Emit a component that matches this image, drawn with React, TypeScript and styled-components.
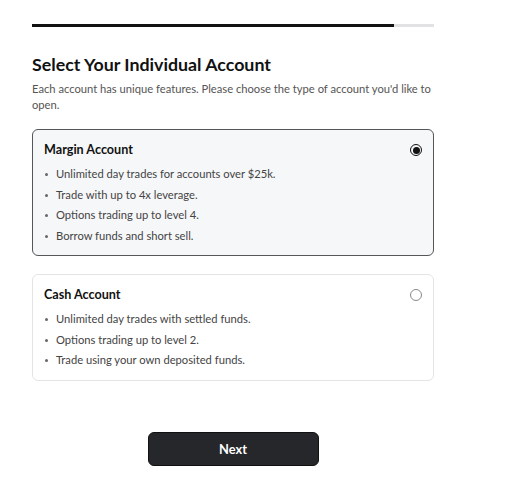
import styled, { createGlobalStyle } from 'styled-components';

const GlobalStyle = createGlobalStyle`
  body {
    margin: 0;
    background: #ffffff;
    font-family: Lato, "Noto Sans", sans-serif;
    color: #111;
  }
`;

const accounts = [
  {
    title: 'Margin Account',
    selected: true,
    features: [
      'Unlimited day trades for accounts over $25k.',
      'Trade with up to 4x leverage.',
      'Options trading up to level 4.',
      'Borrow funds and short sell.',
    ],
  },
  {
    title: 'Cash Account',
    selected: false,
    features: [
      'Unlimited day trades with settled funds.',
      'Options trading up to level 2.',
      'Trade using your own deposited funds.',
    ],
  },
];

function App() {
  return (
    <Page>
      <GlobalStyle />
      <Progress>
        <ProgressFill style={{ width: `${(362 / 402) * 100}%` }} />
      </Progress>
      <Heading>Select Your Individual Account</Heading>
      <Subtitle>
        Each account has unique features. Please choose the type of account you'd like to open.
      </Subtitle>
      <Cards>
        {accounts.map((a) => (
          <Card key={a.title} $selected={a.selected}>
            <CardHeader>
              <CardTitle>{a.title}</CardTitle>
              <Radio $checked={a.selected} />
            </CardHeader>
            <Features>
              {a.features.map((f) => (
                <Feature key={f}>{f}</Feature>
              ))}
            </Features>
          </Card>
        ))}
      </Cards>
      <Footer>
        <NextButton>Next</NextButton>
      </Footer>
    </Page>
  );
}

export default App;

const Page = styled.div`
  width: 402px;
  padding: 24px 0 0 32px;
  display: flex;
  flex-direction: column;
`;

const Progress = styled.div`
  height: 3px;
  background: #e2e2e4;
  width: 100%;
`;

const ProgressFill = styled.div`
  height: 100%;
  background: #111111;
`;

const Heading = styled.h1`
  margin: 25px 0 0;
  font-size: 17.8px;
  line-height: 24px;
  font-weight: 700;
  color: #111;
`;

const Subtitle = styled.p`
  margin: 5px 0 0;
  font-size: 11.2px;
  line-height: 16px;
  color: #555;
`;

const Cards = styled.div`
  margin-top: 16px;
  display: flex;
  flex-direction: column;
  gap: 18px;
`;

const Card = styled.div<{ $selected: boolean }>`
  border: 1px solid ${(p) => (p.$selected ? '#55565a' : '#e4e4e7')};
  background: ${(p) => (p.$selected ? '#f6f7f9' : '#ffffff')};
  border-radius: 6px;
  padding: 12px 11px 9px 11px;
`;

const CardHeader = styled.div`
  display: flex;
  align-items: center;
  justify-content: space-between;
`;

const CardTitle = styled.div`
  font-size: 12.6px;
  line-height: 16px;
  font-weight: 700;
  color: #111;
`;

const Radio = styled.span<{ $checked: boolean }>`
  width: 12px;
  height: 12px;
  box-sizing: border-box;
  border-radius: 50%;
  border: 1px solid ${(p) => (p.$checked ? '#111' : '#8a8a8e')};
  display: flex;
  align-items: center;
  justify-content: center;
  &::after {
    content: '';
    width: 7px;
    height: 7px;
    border-radius: 50%;
    background: ${(p) => (p.$checked ? '#111' : 'transparent')};
  }
`;

const Features = styled.ul`
  list-style: none;
  margin: 6px 0 0;
  padding: 0;
`;

const Feature = styled.li`
  position: relative;
  padding-left: 12px;
  font-size: 11.2px;
  line-height: 20.5px;
  color: #444;
  &::before {
    content: '';
    position: absolute;
    left: 1px;
    top: 9px;
    width: 3px;
    height: 3px;
    border-radius: 50%;
    background: #666;
  }
`;

const Footer = styled.div`
  display: flex;
  justify-content: center;
  margin-top: 51px;
`;

const NextButton = styled.button`
  width: 171px;
  height: 34px;
  border: 1px solid #111;
  border-radius: 6px;
  background: #26272b;
  color: #fff;
  font-family: Lato, "Noto Sans", sans-serif;
  font-size: 12.8px;
  font-weight: 700;
  cursor: pointer;
`;
